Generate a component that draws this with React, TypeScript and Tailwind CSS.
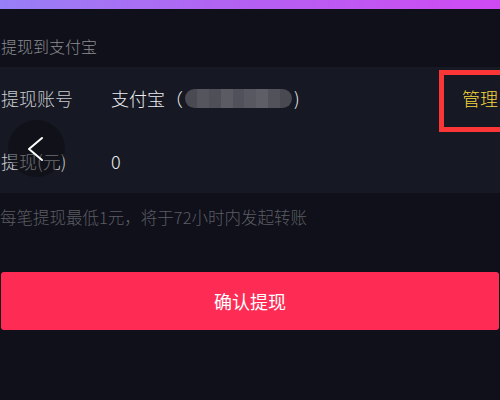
const font = { fontFamily: '"Noto Sans CJK SC", "Noto Sans", sans-serif' }

function BlurredAccount() {
  const cells = ['#4a4b52', '#55565d', '#4f5057', '#5b5c63', '#50515a', '#575860', '#5e5f66', '#52535a', '#494a51']
  return (
    <span className="mx-[2px] inline-flex h-[19px] w-[107px] overflow-hidden rounded-full blur-[0.6px]">
      {cells.map((c, i) => (
        <span key={i} className="h-full flex-1" style={{ backgroundColor: c }} />
      ))}
    </span>
  )
}

export default function App() {
  return (
    <div className="relative h-[400px] w-[500px] overflow-hidden bg-[#0f1019]" style={font}>
      {/* top gradient strip */}
      <div className="h-[9px] bg-gradient-to-r from-[#977ff6] via-[#b45ff1] to-[#cf49f3]" />

      <div className="flex h-[58px] items-end pb-[9px] pl-[1px] text-[16px] font-light text-[#8c8d93]">提现到支付宝</div>

      <div className="bg-[#161823]">
        <div className="flex h-[63px] items-center text-[18px] font-light">
          <span className="w-[111px] pl-[1px] text-[#c9cacd]">提现账号</span>
          <span className="flex items-center text-[#ecedf0]">
            支付宝（
            <BlurredAccount />)
          </span>
          <span className="ml-auto pr-[2px] text-[#f5d73f]">管理</span>
        </div>
        <div className="flex h-[63px] items-center text-[18px] font-light">
          <span className="w-[111px] pl-[1px] text-[#c9cacd]">提现(元)</span>
          <span className="text-[#ecedf0]">0</span>
        </div>
      </div>

      <div className="flex h-[79px] items-start pt-[12px] text-[16.5px] font-light text-[#5c5d64]">
        每笔提现最低1元，将于72小时内发起转账
      </div>

      <div className="px-[1px]">
        <button className="flex h-[58px] w-full items-center justify-center rounded-[3px] bg-[#fe2c55] text-[18px] text-white">
          确认提现
        </button>
      </div>

      {/* floating back button */}
      <div className="absolute left-[8px] top-[120px] h-[57px] w-[57px] rounded-full bg-[#0b0b10]/50">
        <svg width="57" height="57" viewBox="0 0 57 57" fill="none">
          <polyline points="34,18 21,29 34,40" stroke="white" strokeWidth="2" strokeLinecap="round" strokeLinejoin="round" />
        </svg>
      </div>

      {/* annotation box */}
      <div className="absolute left-[439px] top-[70px] h-[62px] w-[80px] border-[5px] border-[#fb3636]" />
    </div>
  )
}
